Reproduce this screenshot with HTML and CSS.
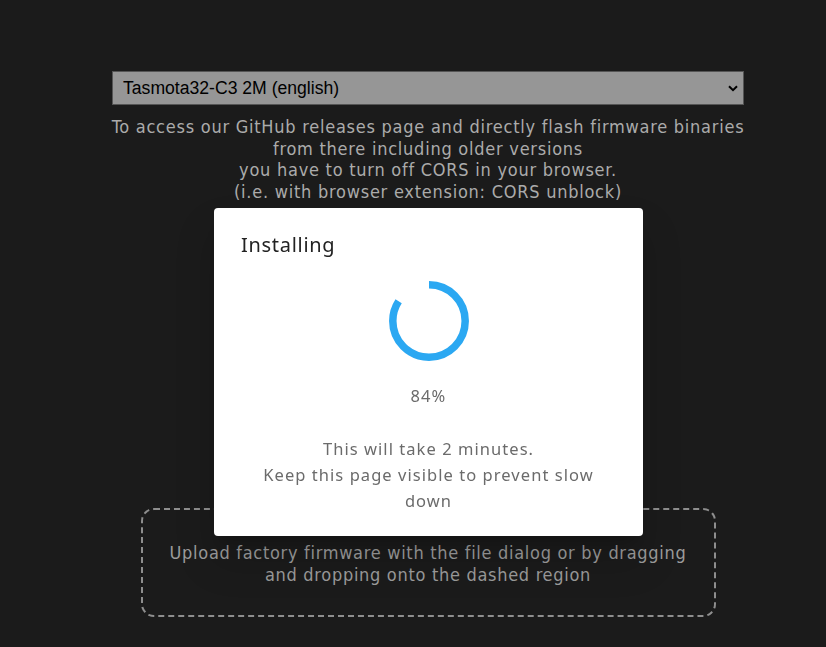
FILE: index.html
```html
<!DOCTYPE html>
<html lang="en">
<head>
<meta charset="utf-8">
<title>Tasmota Installer</title>
<link rel="stylesheet" href="styles.css">
</head>
<body>
<main class="page">
  <select class="fw-select">
    <option>Tasmota32-C3 2M (english)</option>
  </select>
  <p class="cors">To access our GitHub releases page and directly flash firmware binaries<br>from there including older versions<br>you have to turn off CORS in your browser.<br>(i.e. with browser extension: CORS unblock)</p>
  <div class="dropzone">
    <p>Upload factory firmware with the file dialog or by dragging<br>and dropping onto the dashed region</p>
  </div>
</main>

<div class="dialog" role="dialog" aria-label="Installing">
  <h2 class="dialog-title">Installing</h2>
  <svg class="spinner" width="80" height="80" viewBox="0 0 80 80" aria-hidden="true">
    <circle cx="40" cy="40" r="36.2" fill="none" stroke="#2ba8f2" stroke-width="7.5" stroke-dasharray="191.1 300" transform="rotate(-90 40 40)"/>
  </svg>
  <div class="percent">84%</div>
  <p class="msg">This will take 2 minutes.<br>Keep this page visible to prevent slow down</p>
</div>
</body>
</html>
```

FILE: styles.css
```css
html, body {
  margin: 0;
  padding: 0;
  background: #1b1b1b;
}

body {
  width: 826px;
  height: 647px;
  overflow: hidden;
  font-family: "DejaVu Sans Condensed", "DejaVu Sans", Verdana, sans-serif;
  color: #ababab;
}

.page {
  width: 632px;
  margin-left: 112px;
  padding-top: 71px;
  display: flex;
  flex-direction: column;
  align-items: center;
}

.fw-select {
  -webkit-appearance: none;
  appearance: none;
  width: 632px;
  height: 34px;
  box-sizing: border-box;
  margin: 0;
  padding: 0 30px 0 10px;
  border: 1px solid #555;
  border-radius: 0;
  background-color: #969696;
  background-image: url("data:image/svg+xml;utf8,<svg xmlns='http://www.w3.org/2000/svg' width='10' height='7' viewBox='0 0 10 7'><path d='M1 1.2 L5 5.2 L9 1.2' fill='none' stroke='black' stroke-width='2'/></svg>");
  background-repeat: no-repeat;
  background-position: right 5px center;
  font-family: "Liberation Sans", Arial, sans-serif;
  font-size: 17.6px;
  color: #000;
}

.cors {
  margin: 11px 0 0;
  font-size: 18px;
  line-height: 21.7px;
  letter-spacing: 0.75px;
  text-align: center;
  white-space: nowrap;
}

.dropzone {
  margin-top: 305px;
  width: 575px;
  box-sizing: border-box;
  height: 109px;
  border: 2px dashed #8e8e8e;
  border-radius: 13px;
  padding: 32px 10px 0;
}

.dropzone p {
  margin: 0;
  font-size: 18px;
  line-height: 22px;
  letter-spacing: 0.7px;
  text-align: center;
  white-space: nowrap;
  color: #9c9c9c;
}

.dialog {
  position: fixed;
  left: 214px;
  top: 208px;
  width: 429px;
  height: 328px;
  box-sizing: border-box;
  background: #fff;
  border-radius: 4px;
  box-shadow: 0 11px 15px -7px rgba(0,0,0,.2), 0 24px 38px 3px rgba(0,0,0,.14);
  padding: 21px 27px 0;
  display: flex;
  flex-direction: column;
  align-items: center;
  font-family: "Noto Sans", Roboto, sans-serif;
}

.dialog-title {
  align-self: flex-start;
  margin: 0;
  font-size: 20px;
  font-weight: 400;
  line-height: 32px;
  letter-spacing: 0.7px;
  color: #222;
}

.spinner {
  display: block;
  margin-top: 20px;
}

.percent {
  margin-top: 22px;
  font-size: 16.5px;
  line-height: 26px;
  letter-spacing: 1.1px;
  color: #6b6b6b;
}

.msg {
  margin: 27px 0 0;
  font-size: 16.5px;
  line-height: 26px;
  letter-spacing: 1.05px;
  text-align: center;
  color: #6b6b6b;
}
```
